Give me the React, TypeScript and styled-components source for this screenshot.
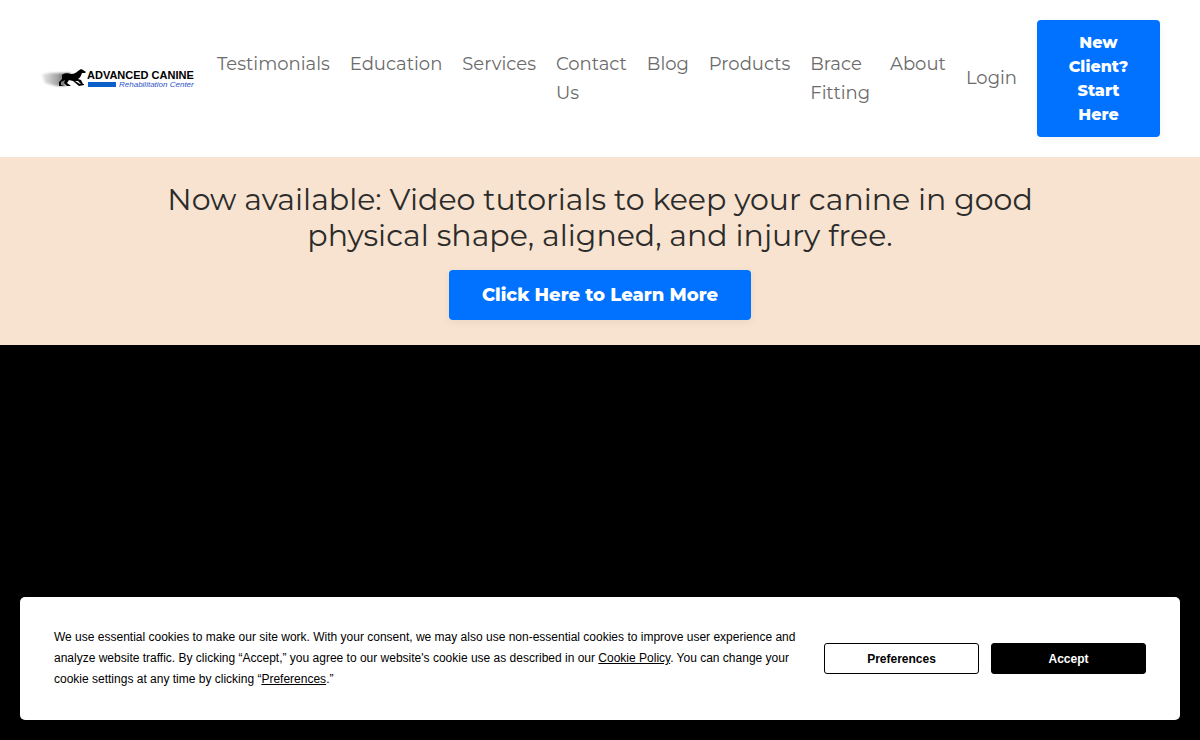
import React from "react";
import styled, { createGlobalStyle } from "styled-components";

const GlobalStyle = createGlobalStyle`
  *, *::before, *::after { box-sizing: border-box; }
  body {
    margin: 0;
    background: #000;
    font-family: Montserrat, Inter, sans-serif;
    font-weight: 400;
  }
`;

const Page = styled.div`
  display: flex;
  flex-direction: column;
  min-height: 100vh;
`;

const Header = styled.header`
  display: flex;
  align-items: center;
  gap: 20px;
  padding: 20px 40px;
  background: #fff;
`;

const LogoLink = styled.a`
  display: block;
  flex: none;
  line-height: 0;
`;

const Nav = styled.nav`
  display: flex;
  flex: 1;
  align-items: flex-start;
  justify-content: space-between;
`;

const NavLink = styled.a<{ $stacked?: boolean }>`
  width: ${(p) => (p.$stacked ? "min-content" : "auto")};
  color: #6b6b6b;
  font-size: 18px;
  line-height: 29px;
  text-decoration: none;
`;

const PrimaryButton = styled.button<{ $compact?: boolean }>`
  flex: none;
  width: ${(p) => (p.$compact ? "123px" : "302px")};
  padding: ${(p) => (p.$compact ? "11px 24px 10px" : "12px 24px")};
  border: 0;
  border-radius: 4px;
  background: #0072ff;
  box-shadow: 0 2px 8px rgba(0, 0, 0, 0.06);
  color: #fff;
  font-family: inherit;
  font-size: ${(p) => (p.$compact ? "16px" : "18px")};
  font-weight: 800;
  line-height: ${(p) => (p.$compact ? "24px" : "26px")};
  cursor: pointer;
`;

const Announcement = styled.section`
  display: flex;
  flex-direction: column;
  align-items: center;
  gap: 16px;
  padding: 25px 20px;
  background: #f7e3cf;
`;

const Headline = styled.h2`
  max-width: 900px;
  margin: 0;
  color: #2b2b2b;
  font-size: 30px;
  font-weight: 400;
  line-height: 36px;
  text-align: center;
`;

const VideoArea = styled.main`
  flex: 1;
  min-height: 240px;
  background: #000;
`;

const CookieBanner = styled.aside`
  position: fixed;
  right: 20px;
  bottom: 20px;
  left: 20px;
  display: flex;
  align-items: center;
  gap: 28px;
  padding: 30px 34px;
  border-radius: 5px;
  background: #fff;
  color: #000;
  font-family: "Liberation Sans", Arial, sans-serif;
  font-weight: 400;
`;

const CookieText = styled.p`
  flex: 1;
  margin: 0;
  font-size: 12px;
  line-height: 21px;
`;

const TextLink = styled.a`
  color: inherit;
`;

const CookieActions = styled.div`
  display: flex;
  flex: none;
  gap: 12px;
`;

const CookieButton = styled.button<{ $filled?: boolean }>`
  width: 155px;
  height: 31px;
  border: 1px solid #000;
  border-radius: 3px;
  background: ${(p) => (p.$filled ? "#000" : "#fff")};
  color: ${(p) => (p.$filled ? "#fff" : "#000")};
  font-family: inherit;
  font-size: 12px;
  font-weight: 700;
  cursor: pointer;
`;

const Logo = () => (
  <svg width="157" height="26" viewBox="0 1 157 26" role="img" aria-label="Advanced Canine Rehabilitation Center">
    <defs>
      <linearGradient id="trail" x1="0" x2="1">
        <stop offset="0" stopColor="#000" stopOpacity="0.08" />
        <stop offset="0.5" stopColor="#000" stopOpacity="0.35" />
        <stop offset="1" stopColor="#000" stopOpacity="0.75" />
      </linearGradient>
      <filter id="soft" x="-20%" y="-20%" width="140%" height="140%">
        <feGaussianBlur stdDeviation="0.9" />
      </filter>
    </defs>
    <path d="M2 9L12 8L30 8L32 13L25 16L26 21L16 21L5 18L3 13Z" fill="url(#trail)" filter="url(#soft)" />
    <path
      d="M22 10C24 8 28 8 31 9C34 9 36 8 38 6L41 4L43 5L46 7L45 8L42 8C41 11 40 13 38 14L41 15L43 19L41 19L38 16L35 16L40 19L44 19L44 20L39 21L33 16L29 15L27 18L31 21L27 21L24 18L25 15L21 17L21 20L25 21L19 21L19 17L22 14Z"
      fill="#000"
    />
    <text x="47" y="14" fontFamily="Liberation Sans, Arial, sans-serif" fontSize="11" fontWeight="700" fill="#000">
      ADVANCED CANINE
    </text>
    <rect x="48" y="17" width="28" height="5" fill="#0b5fc8" />
    <text x="79" y="22" fontFamily="Liberation Sans, Arial, sans-serif" fontSize="8" fontStyle="italic" fontWeight="400" fill="#2f55c9">
      Rehabilitation Center
    </text>
  </svg>
);

const links = [
  { label: "Testimonials" },
  { label: "Education" },
  { label: "Services" },
  { label: "Contact Us", stacked: true },
  { label: "Blog" },
  { label: "Products" },
  { label: "Brace Fitting", stacked: true },
  { label: "About" },
];

export default function App() {
  return (
    <Page>
      <GlobalStyle />
      <Header>
        <LogoLink href="#home">
          <Logo />
        </LogoLink>
        <Nav>
          {links.map((link) => (
            <NavLink key={link.label} href="#" $stacked={link.stacked}>
              {link.label}
            </NavLink>
          ))}
        </Nav>
        <NavLink href="#login">Login</NavLink>
        <PrimaryButton $compact>New Client? Start Here</PrimaryButton>
      </Header>
      <Announcement>
        <Headline>
          Now available: Video tutorials to keep your canine in good physical shape, aligned, and injury free.
        </Headline>
        <PrimaryButton>Click Here to Learn More</PrimaryButton>
      </Announcement>
      <VideoArea />
      <CookieBanner aria-label="Cookie consent">
        <CookieText>
          We use essential cookies to make our site work. With your consent, we may also use non-essential cookies to
          improve user experience and analyze website traffic. By clicking “Accept,” you agree to our website's cookie
          use as described in our <TextLink href="#policy">Cookie Policy</TextLink>. You can change your cookie
          settings at any time by clicking “<TextLink href="#preferences">Preferences</TextLink>.”
        </CookieText>
        <CookieActions>
          <CookieButton>Preferences</CookieButton>
          <CookieButton $filled>Accept</CookieButton>
        </CookieActions>
      </CookieBanner>
    </Page>
  );
}
